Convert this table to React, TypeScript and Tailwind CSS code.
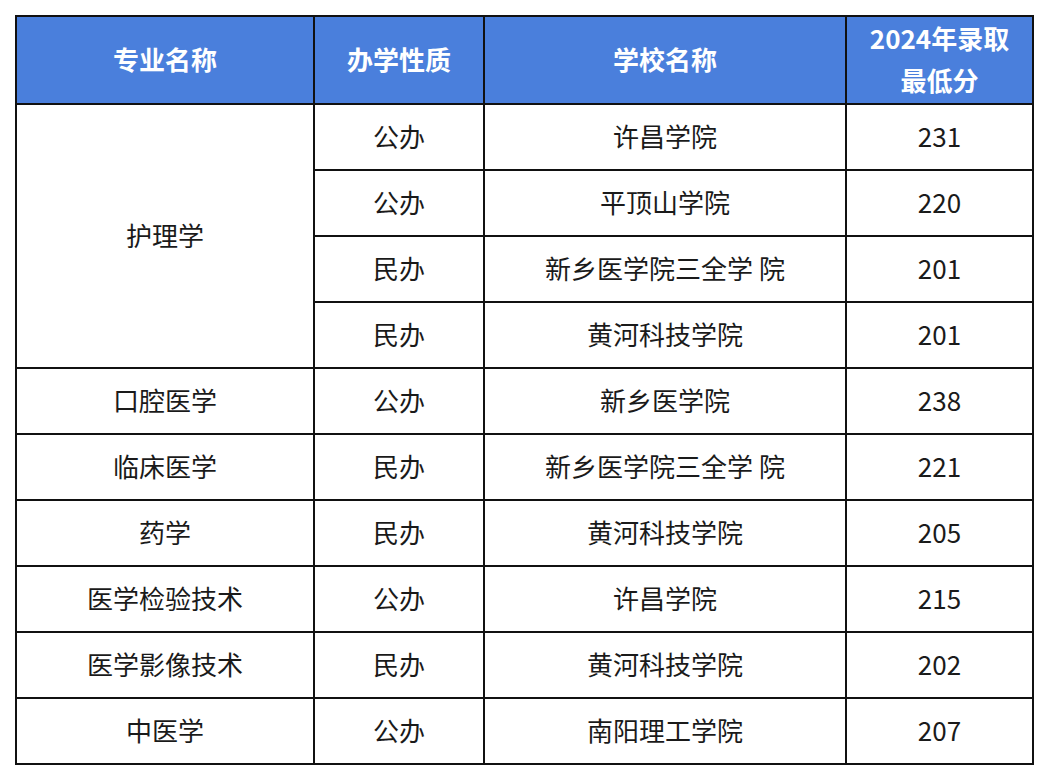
import React from 'react';

const rows = [
  { major: '护理学', span: 4, type: '公办', school: '许昌学院', score: '231' },
  { type: '公办', school: '平顶山学院', score: '220' },
  { type: '民办', school: '新乡医学院三全学 院', score: '201' },
  { type: '民办', school: '黄河科技学院', score: '201' },
  { major: '口腔医学', span: 1, type: '公办', school: '新乡医学院', score: '238' },
  { major: '临床医学', span: 1, type: '民办', school: '新乡医学院三全学 院', score: '221' },
  { major: '药学', span: 1, type: '民办', school: '黄河科技学院', score: '205' },
  { major: '医学检验技术', span: 1, type: '公办', school: '许昌学院', score: '215' },
  { major: '医学影像技术', span: 1, type: '民办', school: '黄河科技学院', score: '202' },
  { major: '中医学', span: 1, type: '公办', school: '南阳理工学院', score: '207' },
];

const cell = 'border-2 border-[#111] text-center align-middle p-0 pb-[4px]';
const head = 'border-2 border-[#111] text-center align-middle p-0 pb-[2px]';

const App: React.FC = () => {
  return (
    <div
      className="w-[1048px] h-[780px] bg-white pt-[15px] pl-[15px]"
      style={{ fontFamily: '"Noto Sans CJK SC", "Noto Sans", sans-serif' }}
    >
      <table className="w-[1017px] table-fixed border-collapse text-[26px] text-[#1a1a1a]">
        <colgroup>
          <col className="w-[298px]" />
          <col className="w-[170px]" />
          <col className="w-[362px]" />
          <col className="w-[187px]" />
        </colgroup>
        <thead>
          <tr className="h-[86px] bg-[#4a7fdc] text-white font-bold leading-[42px]">
            <th className={head}>专业名称</th>
            <th className={head}>办学性质</th>
            <th className={head}>学校名称</th>
            <th className={head}>
              2024年录取
              <br />
              最低分
            </th>
          </tr>
        </thead>
        <tbody>
          {rows.map((r, i) => (
            <tr key={i} className="h-[66px]">
              {r.major && (
                <td className={cell} rowSpan={r.span}>
                  {r.major}
                </td>
              )}
              <td className={cell}>{r.type}</td>
              <td className={cell}>{r.school}</td>
              <td className={cell}>{r.score}</td>
            </tr>
          ))}
        </tbody>
      </table>
    </div>
  );
};

export default App;
